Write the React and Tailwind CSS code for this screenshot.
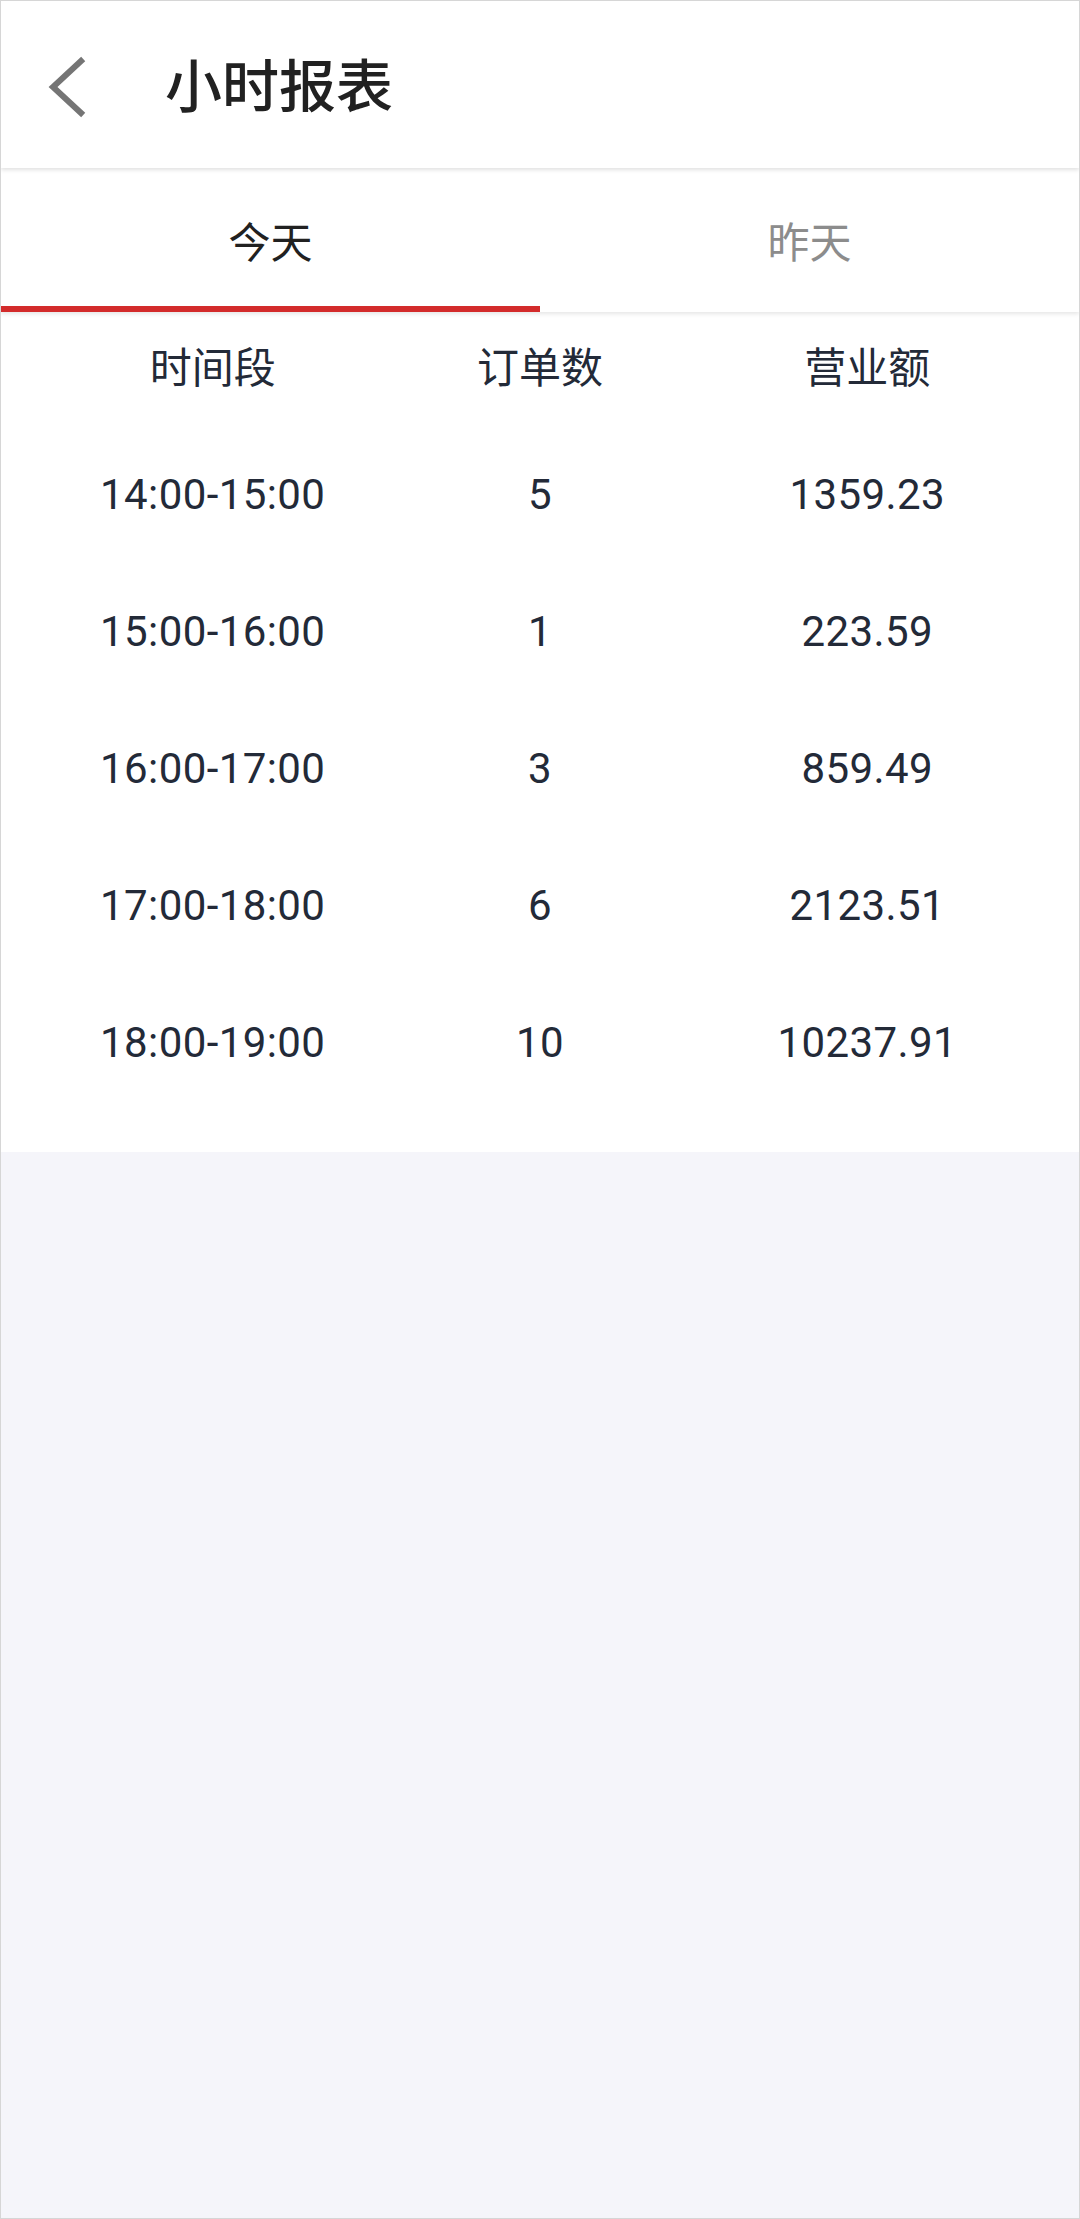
const rows = [
  { time: '14:00-15:00', orders: '5', amount: '1359.23' },
  { time: '15:00-16:00', orders: '1', amount: '223.59' },
  { time: '16:00-17:00', orders: '3', amount: '859.49' },
  { time: '17:00-18:00', orders: '6', amount: '2123.51' },
  { time: '18:00-19:00', orders: '10', amount: '10237.91' },
];

const font = { fontFamily: 'Roboto, "Noto Sans CJK SC", sans-serif' };

export default function App() {
  return (
    <div
      className="w-[1080px] h-[2219px] bg-[#f5f5fa] border border-[#d6d6d6] flex flex-col overflow-hidden"
      style={font}
    >
      {/* Header */}
      <div className="relative z-20 h-[167px] bg-white flex items-center shadow-[0_2px_4px_rgba(0,0,0,0.12)]">
        <div className="w-[164px] flex items-center pl-[46px] pt-[4px]">
          <svg width="40" height="64" viewBox="0 0 40 64" fill="none">
            <path d="M34 6 L6 32 L34 58" stroke="#757575" strokeWidth="6" strokeLinecap="square" strokeLinejoin="miter" />
          </svg>
        </div>
        <h1 className="text-[57px] leading-none font-medium text-[#212121] pt-[6px]">小时报表</h1>
      </div>

      {/* Tabs */}
      <div className="relative z-10 h-[144px] bg-white flex shadow-[0_2px_4px_rgba(0,0,0,0.10)]">
        <div className="flex-1 relative flex items-center justify-center">
          <span className="text-[42px] leading-none text-[#212121] pt-[8px]">今天</span>
          <div className="absolute left-0 right-0 bottom-0 h-[6px] bg-[#d32b2b]" />
        </div>
        <div className="flex-1 flex items-center justify-center">
          <span className="text-[42px] leading-none text-[#8c8c8c] pt-[8px]">昨天</span>
        </div>
      </div>

      {/* Table */}
      <div className="bg-white px-12 pb-[41px] text-[#232a38]">
        <div className="grid grid-cols-3 h-[114px] items-center text-center text-[42px] leading-none">
          <div>时间段</div>
          <div>订单数</div>
          <div>营业额</div>
        </div>
        {rows.map(r => (
          <div key={r.time} className="grid grid-cols-3 h-[137px] items-center text-center text-[42px] leading-none tracking-[0.4px]">
            <div>{r.time}</div>
            <div>{r.orders}</div>
            <div>{r.amount}</div>
          </div>
        ))}
      </div>
    </div>
  );
}
